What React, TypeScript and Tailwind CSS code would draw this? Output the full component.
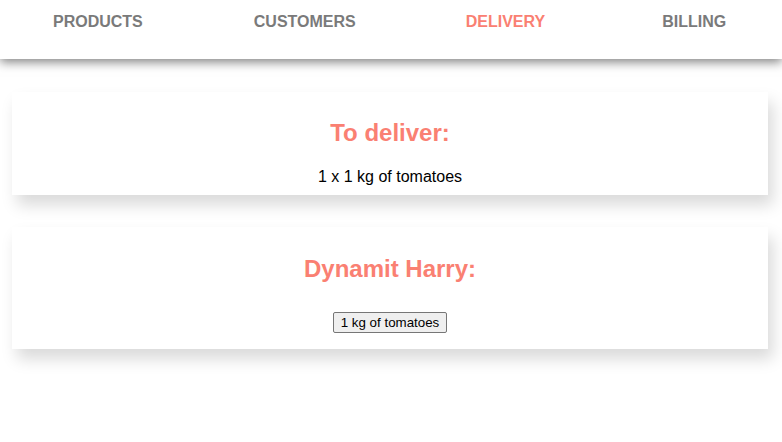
import React from "react";

export default function App() {
  return (
    <div className="min-h-[442px] bg-white font-['Liberation_Sans',Arial,sans-serif]">
      <nav className="h-[59px] flex items-start pt-[13px] pl-[53px] bg-white shadow-[0_3px_10px_rgba(0,0,0,0.5)] relative">
        <span className="text-[16px] leading-[18px] font-bold text-[#7a7a7a]">PRODUCTS</span>
        <span className="ml-[111px] text-[16px] leading-[18px] font-bold text-[#7a7a7a]">CUSTOMERS</span>
        <span className="ml-[110px] text-[16px] leading-[18px] font-bold text-[#fa8072]">DELIVERY</span>
        <span className="ml-[117px] text-[16px] leading-[18px] font-bold text-[#7a7a7a]">BILLING</span>
      </nav>
      <div className="pl-[12px] pr-[14px] pt-[33px] flex flex-col gap-[32px]">
        <div className="bg-white shadow-[5px_10px_15px_rgba(0,0,0,0.15)] pt-[27px] pb-[9px] flex flex-col items-center">
          <h2 className="text-[24px] leading-[28px] font-bold text-[#fa8072]">To deliver:</h2>
          <p className="mt-[21px] text-[16px] leading-[18px] text-black">1 x 1 kg of tomatoes</p>
        </div>
        <div className="bg-white shadow-[5px_10px_15px_rgba(0,0,0,0.15)] pt-[28px] pb-[16px] flex flex-col items-center">
          <h2 className="text-[24px] leading-[28px] font-bold text-[#fa8072]">Dynamit Harry:</h2>
          <button className="mt-[29px] h-[21px] px-[7px] bg-[#efefef] border border-[#767676] rounded-[2px] text-[13.33px] leading-[15px] text-black font-['Liberation_Sans',Arial,sans-serif]">
            1 kg of tomatoes
          </button>
        </div>
      </div>
    </div>
  );
}
